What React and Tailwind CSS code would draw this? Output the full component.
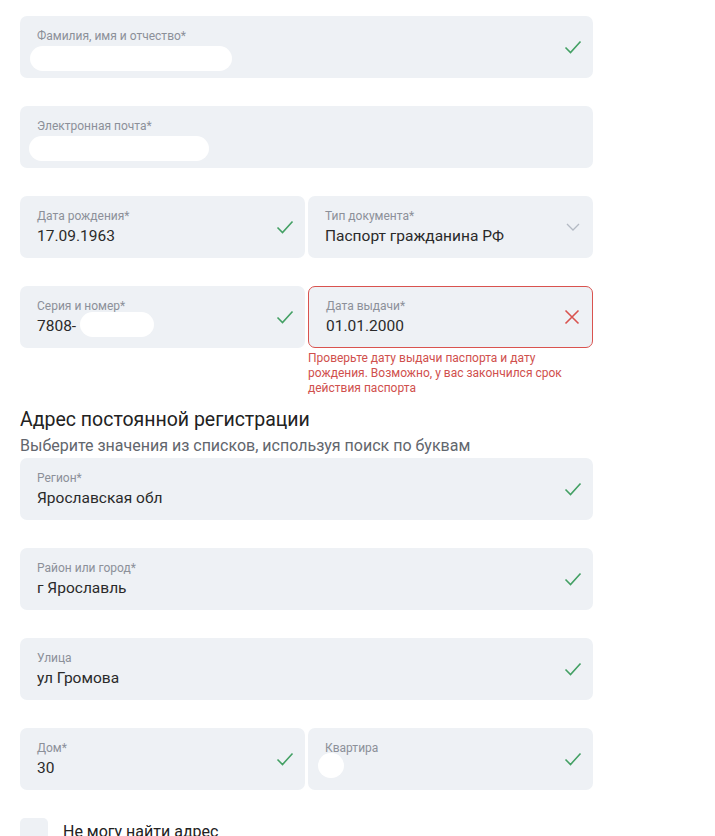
import React from 'react'

function Check() {
  return (
    <svg width="18" height="14" viewBox="0 0 18 14" fill="none">
      <path d="M1.5 7.5 L6.5 12.5 L16.5 1.5" stroke="#43a064" strokeWidth="1.6" />
    </svg>
  )
}

function Cross() {
  return (
    <svg width="16" height="16" viewBox="0 0 16 16" fill="none">
      <path d="M1.5 1.5 L14.5 14.5 M14.5 1.5 L1.5 14.5" stroke="#d9534f" strokeWidth="1.6" />
    </svg>
  )
}

function Chevron() {
  return (
    <svg width="14" height="8" viewBox="0 0 14 8" fill="none">
      <path d="M1 1 L7 7 L13 1" stroke="#b4bac4" strokeWidth="1.3" />
    </svg>
  )
}

function Field({ label, value, icon, error, children }) {
  return (
    <div
      className={
        'h-[62px] rounded-[7px] bg-[#eef1f5] pl-[17px] pr-[8px] flex items-center justify-between ' +
        (error ? 'border border-[#d9534f]' : '')
      }
    >
      <div className="flex flex-col min-w-0 relative">
        <span className="text-[12px] leading-4 text-[#8c9099]">{label}</span>
        <span className="text-[15.5px] leading-5 text-[#2a2a2a] mt-[2px] h-5">{value}</span>
        {children}
      </div>
      <div className="w-[24px] flex justify-center shrink-0">
        {icon === 'check' && <Check />}
        {icon === 'cross' && <Cross />}
        {icon === 'chevron' && <Chevron />}
      </div>
    </div>
  )
}

export default function App() {
  return (
    <div className="bg-white min-h-[836px] pt-4 pl-5 font-['Roboto',sans-serif]">
      <div className="w-[573px]">
        <div className="mb-[28px]">
          <Field label="Фамилия, имя и отчество*" icon="check">
            <span className="absolute left-[-7px] top-[18px] w-[202px] h-[25px] rounded-full bg-white" />
          </Field>
        </div>
        <div className="mb-[28px]">
          <Field label="Электронная почта*">
            <span className="absolute left-[-8px] top-[18px] w-[180px] h-[25px] rounded-full bg-white" />
          </Field>
        </div>
        <div className="grid grid-cols-2 gap-[3px] mb-[28px]">
          <Field label="Дата рождения*" value="17.09.1963" icon="check" />
          <Field label="Тип документа*" value="Паспорт гражданина РФ" icon="chevron" />
        </div>
        <div className="grid grid-cols-2 gap-[3px]">
          <div>
            <Field label="Серия и номер*" value="7808-" icon="check">
              <span className="absolute left-[43px] top-[14px] w-[74px] h-[25px] rounded-full bg-white" />
            </Field>
          </div>
          <div>
            <Field label="Дата выдачи*" value="01.01.2000" icon="cross" error />
            <p className="mt-[3px] text-[12px] leading-[15px] text-[#d0504d] pr-4">
              Проверьте дату выдачи паспорта и дату рождения. Возможно, у вас закончился срок действия паспорта
            </p>
          </div>
        </div>

        <h2 className="mt-[10px] text-[19.5px] leading-7 text-[#222]">Адрес постоянной регистрации</h2>
        <p className="text-[16px] leading-5 text-[#62666d] mt-[2px] mb-[2px]">
          Выберите значения из списков, используя поиск по буквам
        </p>

        <div className="mb-[28px]">
          <Field label="Регион*" value="Ярославская обл" icon="check" />
        </div>
        <div className="mb-[28px]">
          <Field label="Район или город*" value="г Ярославль" icon="check" />
        </div>
        <div className="mb-[28px]">
          <Field label="Улица" value="ул Громова" icon="check" />
        </div>
        <div className="grid grid-cols-2 gap-[3px] mb-[28px]">
          <Field label="Дом*" value="30" icon="check" />
          <Field label="Квартира" icon="check">
            <span className="absolute left-[-7px] top-[13px] w-[26px] h-[25px] rounded-full bg-white" />
          </Field>
        </div>
        <div className="flex items-center gap-[15px]">
          <div className="w-[28px] h-[28px] rounded-[5px] bg-[#eef1f5]" />
          <span className="text-[16px] text-[#222]">Не могу найти адрес</span>
        </div>
      </div>
    </div>
  )
}
